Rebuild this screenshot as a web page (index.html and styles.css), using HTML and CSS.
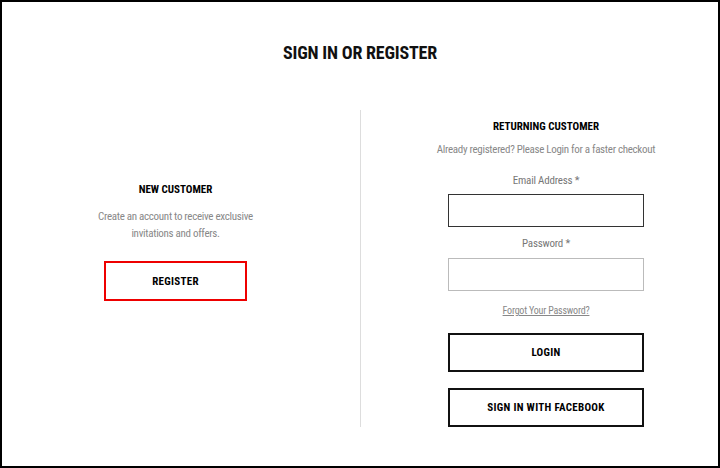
FILE: index.html
```html
<!DOCTYPE html>
<html lang="en">
<head>
  <meta charset="UTF-8">
  <title>Sign In or Register</title>
  <link rel="stylesheet" href="styles.css">
</head>
<body>

  <div class="page">
    <h1>SIGN IN OR REGISTER</h1>

    <div class="columns">
      <div class="col new-customer">
        <h3>NEW CUSTOMER</h3>
        <p class="note">Create an account to receive exclusive<br>invitations and offers.</p>
        <button class="btn btn-register">REGISTER</button>
      </div>

      <div class="divider"></div>

      <div class="col returning">
        <h3>RETURNING CUSTOMER</h3>
        <p class="note">Already registered? Please Login for a faster checkout</p>

        <form class="login-form">
          <label for="email" class="label-email">Email Address *</label>
          <input type="email" id="email" class="field field-active">

          <label for="password">Password *</label>
          <input type="password" id="password" class="field">

          <a href="#" class="forgot">Forgot Your Password?</a>

          <button type="submit" class="btn btn-login">LOGIN</button>
          <button type="button" class="btn">SIGN IN WITH FACEBOOK</button>
        </form>
      </div>
    </div>
  </div>

</body>
</html>
```

FILE: styles.css
```css
* {
  box-sizing: border-box;
}

body {
  margin: 0;
  font-family: Roboto, 'Open Sans', sans-serif;
  font-stretch: 75%;
  background: #fff;
  color: #111;
}

.page {
  width: 720px;
  height: 468px;
  border: 2px solid #000;
}

h1 {
  margin: 38px 0 0;
  font-size: 18px;
  line-height: 26px;
  text-align: center;
  font-weight: bold;
  letter-spacing: -0.2px;
}

.columns {
  display: flex;
  margin-top: 44px;
}

.col {
  text-align: center;
}

.new-customer {
  width: 347px;
  padding-top: 72px;
  display: flex;
  flex-direction: column;
  align-items: center;
}

.divider {
  width: 1px;
  height: 317px;
  margin-left: 11px;
  background: #ddd;
}

.returning {
  flex: 1;
  padding-left: 13px;
}

h3 {
  margin: 9px 0 0;
  font-size: 11px;
  line-height: 16px;
  font-weight: bold;
  color: #000;
}

.new-customer h3 {
  margin-top: 0;
}

.note {
  margin: 7px 0 0;
  font-size: 11px;
  line-height: 16px;
  letter-spacing: -0.3px;
  color: #888;
}

.new-customer .note {
  margin-top: 10px;
  line-height: 17px;
}

.login-form {
  display: flex;
  flex-direction: column;
  align-items: center;
}

label {
  margin-top: 9px;
  font-size: 11px;
  line-height: 16px;
  letter-spacing: -0.2px;
  color: #777;
}

.label-email {
  margin-top: 15px;
}

.field {
  width: 196px;
  height: 33px;
  margin-top: 6px;
  border: 1px solid #bbb;
}

.field-active {
  margin-top: 5px;
  border-color: #333;
}

.forgot {
  margin-top: 12px;
  font-size: 10px;
  line-height: 16px;
  letter-spacing: -0.2px;
  color: #888;
}

.btn {
  width: 196px;
  height: 39px;
  margin-top: 16px;
  border: 2px solid #111;
  background: #fff;
  font-family: inherit;
  font-stretch: 75%;
  font-size: 11px;
  font-weight: bold;
  letter-spacing: 0.3px;
  color: #000;
  cursor: pointer;
}

.btn-login {
  margin-top: 14px;
}

.btn-register {
  width: 143px;
  height: 40px;
  margin-top: 19px;
  border-color: #e00;
}
```
